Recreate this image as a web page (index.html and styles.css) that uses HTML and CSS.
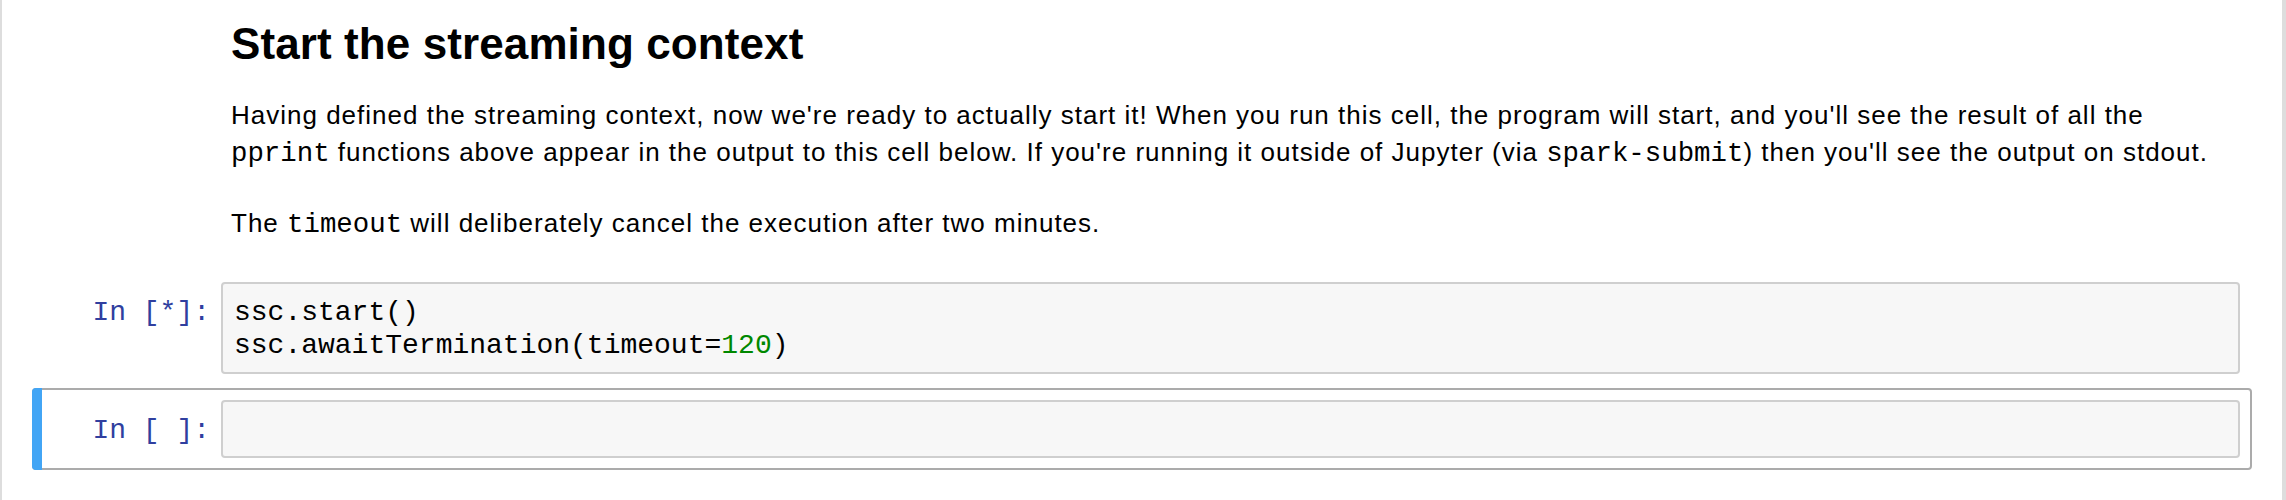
FILE: index.html
```html
<!DOCTYPE html>
<html lang="en">
<head>
<meta charset="utf-8">
<title>Notebook</title>
<link rel="stylesheet" href="styles.css">
</head>
<body>
<div class="notebook">
  <div class="cell text-cell">
    <div class="prompt"></div>
    <div class="inner text-render">
      <h2 class="heading">Start the streaming context</h2>
      <p class="para">Having defined the streaming context, now we're ready to actually start it! When you run this cell, the program will start, and you'll see the result of all the <code class="ic">pprint</code> functions above appear in the output to this cell below. If you're running it outside of Jupyter (via <code class="ic">spark-submit</code>) then you'll see the output on stdout.</p>
      <p class="para para-gap">The <code class="ic">timeout</code> will deliberately cancel the execution after two minutes.</p>
    </div>
  </div>
  <div class="cell code-cell">
    <div class="prompt code-prompt">In&nbsp;[*]:</div>
    <div class="inner input-area">
      <pre class="code"><span>ssc.start()</span>
<span>ssc.awaitTermination(timeout=<span class="num">120</span>)</span></pre>
    </div>
  </div>
  <div class="cell code-cell selected">
    <div class="prompt code-prompt">In&nbsp;[&nbsp;]:</div>
    <div class="inner input-area">
      <pre class="code"> </pre>
    </div>
  </div>
</div>
</body>
</html>
```
FILE: styles.css
```css
html, body {
  margin: 0;
  padding: 0;
  background: #ffffff;
}

body {
  font-family: "Liberation Sans", Arial, Helvetica, sans-serif;
  color: #000000;
}

.notebook {
  height: 500px;
  box-sizing: border-box;
  border-left: 2px solid #dddddd;
  border-right: 4px solid #dddddd;
  padding: 0 30px;
  display: flex;
  flex-direction: column;
}

.cell {
  position: relative;
  display: flex;
  padding: 10px;
  border: 2px solid transparent;
  border-radius: 4px;
}

.prompt {
  flex: none;
  width: 177px;
  box-sizing: border-box;
  padding-right: 11px;
  text-align: right;
}

.inner {
  flex: 1;
  min-width: 0;
}

/* markdown cell */
.text-render {
  padding: 6px 8px 16px 10px;
}

.heading {
  margin: 0 0 26px 0;
  font-size: 44px;
  line-height: 52.8px;
  font-weight: bold;
  letter-spacing: 0.1px;
}

.para {
  margin: 0;
  font-size: 26px;
  line-height: 37px;
  letter-spacing: 1px;
}

.para-gap {
  margin-top: 34px;
}

.ic {
  font-family: "Liberation Mono", "Courier New", monospace;
  font-size: 27.4px;
  line-height: 30px;
  letter-spacing: 0;
}

/* code cells */
.code-cell + .code-cell {
  margin-top: 2px;
}

.code-prompt {
  font-family: "Liberation Mono", "Courier New", monospace;
  font-size: 28px;
  line-height: 33.5px;
  color: #303f9f;
  padding-top: 14px;
  white-space: nowrap;
}

.input-area {
  background: #f7f7f7;
  border: 2px solid #cfcfcf;
  border-radius: 4px;
  padding: 12px 0 9px 0;
}

.code {
  margin: 0;
  padding: 0 11px;
  font-family: "Liberation Mono", "Courier New", monospace;
  font-size: 28px;
  line-height: 33.5px;
  color: #000000;
}

.num {
  color: #008800;
}

.selected {
  border-color: #ababab;
}

.selected::before {
  content: "";
  position: absolute;
  left: -2px;
  top: -2px;
  bottom: -2px;
  width: 10px;
  background: #42a5f5;
  border-radius: 4px 0 0 4px;
}
```
